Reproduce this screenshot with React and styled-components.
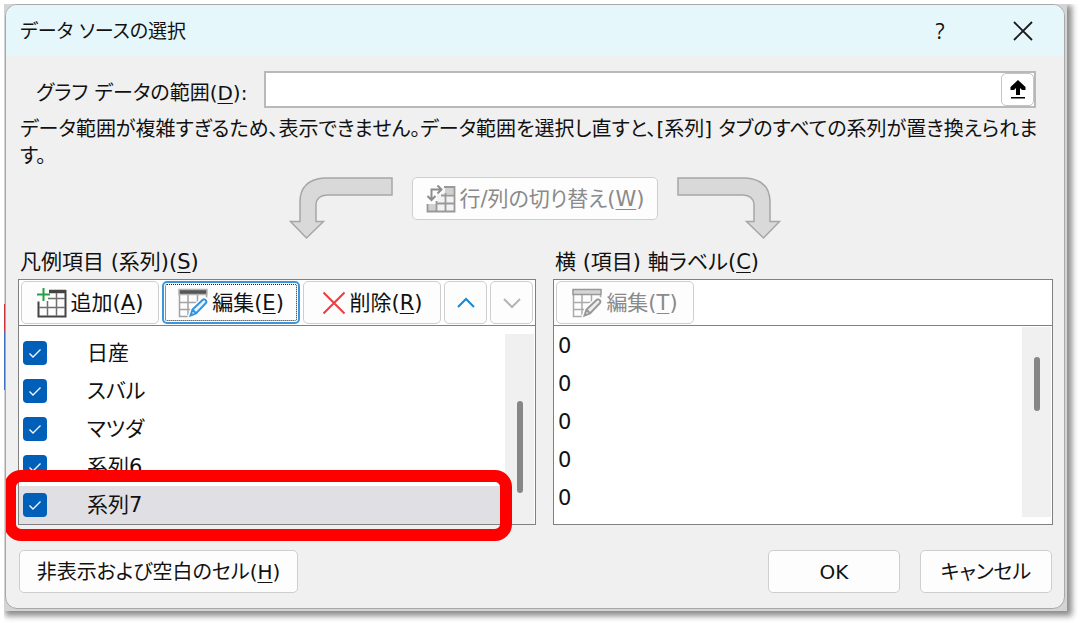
import React, { useState } from 'react';
import styled, { createGlobalStyle } from 'styled-components';

const GlobalStyle = createGlobalStyle`
    * {
        box-sizing: border-box;
    }

    body {
        margin: 0;
        background: #fff;
        color: #111;
        font-family: "DejaVu Sans", "Noto Sans CJK JP", sans-serif;
        font-size: 21px;
        line-height: 28px;
        font-feature-settings: "palt";
    }

    button, input {
        font: inherit;
        font-feature-settings: inherit;
        color: inherit;
    }

    u {
        text-decoration-thickness: 1px;
        text-underline-offset: 3px;
    }
`;

const Frame = styled.div`
    margin: 4px 13px 13px 4px;
    padding: 0 2px 2px 1px;
    background:
        linear-gradient(#d4d4d4 300px, #c8323c 300px, #c8323c 326px, #3f6fc0 330px, #3f6fc0 386px, #d4d4d4 386px) left / 2px 100% no-repeat,
        #d4d4d4;
    box-shadow: 3px 3px 6px 2px #8c8c8c;
    clip-path: inset(0 -13px -13px 0);
`;

const Dialog = styled.div`
    border: 1px solid #a8a8a8;
    border-radius: 12px;
    background: #f0f0f0;
    overflow: hidden;
`;

const TitleBar = styled.header`
    display: flex;
    align-items: center;
    height: 51px;
    padding: 0 21px 0 14px;
    background: #e5f7fa;
`;

const Title = styled.h1`
    flex: 1;
    margin: 0;
    font-size: 19px;
    font-weight: 400;
`;

const TitleButton = styled.button`
    display: flex;
    align-items: center;
    justify-content: center;
    width: 40px;
    height: 40px;
    margin-left: 43px;
    padding: 0;
    border: 0;
    background: none;
    font-family: "Open Sans", sans-serif;
`;

const Content = styled.main`
    padding: 15px 11px 15px 12px;
`;

const RangeRow = styled.div`
    display: flex;
    align-items: center;
    padding: 0 17px 0 18px;

    label {
        flex: 0 0 228px;
        padding-top: 7px;
        font-size: 20px;
    }
`;

const RangeField = styled.div`
    display: flex;
    flex: 1;
    height: 37px;
    border: 2px solid #b9b9bd;
    background: #fff;
`;

const RangeInput = styled.input`
    flex: 1;
    min-width: 0;
    border: 0;
    outline: 0;
    background: none;
`;

const PickButton = styled.button`
    display: flex;
    align-items: center;
    justify-content: center;
    width: 33px;
    padding: 0;
    border: 1px solid #c4c4c4;
    border-radius: 5px;
    background: #fff;
`;

const Message = styled.p`
    margin: 8px 0 7px;
    padding: 0 10px 0 2px;
    font-size: 20px;
    line-height: 27px;
`;

const SwitchRow = styled.div`
    display: flex;
    gap: 19px;
    padding-left: 271px;
    height: 62px;
`;

const Button = styled.button`
    display: flex;
    align-items: center;
    justify-content: center;
    gap: 4px;
    width: ${({$width}) => $width}px;
    height: 43px;
    padding: 0;
    border: 1px solid #cecece;
    border-radius: 5px;
    background: #fdfdfd;
    white-space: nowrap;

    &:disabled {
        color: #8a8a8a;
    }

    ${({$focused}) => $focused && `
        border: 2px solid #3a96dd;
        outline: 1px dotted #222;
        outline-offset: -4px;
    `}
`;

const Panels = styled.div`
    display: grid;
    grid-template-columns: 29fr 28fr;
    column-gap: 17px;
    margin-top: 9px;
`;

const PanelTitle = styled.h2`
    margin: 0 0 3px 2px;
    font-size: 21px;
    font-weight: 400;
`;

const Panel = styled.div`
    position: relative;
    border: 1px solid #808080;
    background: #fff;
`;

const Toolbar = styled.div`
    display: flex;
    gap: 3px;
    padding: 1px 2px;
    border-bottom: 1px solid #808080;
`;

const ListArea = styled.div`
    display: flex;
    height: 198px;
    padding: ${({$top}) => $top}px 1px 0 0;
`;

const List = styled.ul`
    flex: 1;
    margin: 0;
    padding: 0;
    list-style: none;
`;

const Row = styled.li`
    display: flex;
    align-items: center;
    height: 38px;
    padding-left: 4px;
    background: ${({$selected}) => $selected ? '#e0dfe4' : 'none'};

    label {
        display: flex;
        align-items: center;
        gap: 40px;
    }
`;

const CheckBox = styled.span`
    display: grid;
    width: 24px;
    height: 24px;

    input, svg {
        grid-area: 1 / 1;
        width: 24px;
        height: 24px;
        margin: 0;
    }

    input {
        appearance: none;
        border-radius: 4px;
        background: #005fb8;
    }

    svg {
        pointer-events: none;
    }
`;

const Track = styled.div`
    width: 29px;
    height: 190px;
    padding: ${({$offset}) => $offset}px 0 0 12px;
    background: #f0f0f0;
`;

const Thumb = styled.div`
    width: 6px;
    height: ${({$size}) => $size}px;
    border-radius: 3px;
    background: #868686;
`;

const Highlight = styled.div`
    position: absolute;
    left: -15px;
    right: 23px;
    bottom: -17px;
    height: 71px;
    border: 12px solid #ff0000;
    border-radius: 17px;
    pointer-events: none;
`;

const Footer = styled.footer`
    display: flex;
    gap: 20px;
    margin-top: 25px;
    padding: 0 1px;
    font-size: 20px;

    button:first-child {
        margin-right: auto;
    }
`;

const GridIcon = ({disabled}) => {
    const line = disabled ? '#aaa' : '#a3a3a3';
    const head = disabled ? '#999' : '#555';
    return (
        <svg width="30" height="30" viewBox="0 0 30 30" fill="none">
            <path d="M1.5 2V28.5H10M1.5 7V28M10 7V27M19.5 7V17M1 14.5H22M1 21.5H15M28.5 7V10" stroke={line} strokeWidth="1.5"/>
            <path d="M1 1.5H29V6.5H1Z" fill={disabled ? '#d5d5d5' : head} stroke={disabled ? head : '#b5b5b5'} strokeWidth="1.5"/>
            <path d="M12 28L14.5 20.5L24.5 11.5Q27 9.5 28.5 12Q29.5 14 27.5 16L18 25.5Z" fill="#fff" stroke="#fdfdfd" strokeWidth="4"/>
            <path d="M12.5 27.5L14.5 21.5L24.5 12Q26.5 10.5 28 12.5Q29 14 27.5 15.5L18 25.5ZM14.5 21.5L18 25.5" fill={disabled ? '#eee' : '#e3f2fc'} stroke={disabled ? '#999' : '#3493dc'} strokeWidth="2"/>
        </svg>
    );
};

const AddIcon = () => (
    <svg width="30" height="30" viewBox="0 0 30 30" fill="none">
        <path d="M1.5 13.5V28.5H28.5V2" stroke="#444" strokeWidth="2"/>
        <path d="M12 3.5H29" stroke="#444" strokeWidth="3.5"/>
        <path d="M11 10.5H28M2 19.5H28M10.5 13V28M19.5 5V28" stroke="#707070" strokeWidth="1.5"/>
        <path d="M6.5 0V13M0 6.5H13" stroke="#26a045" strokeWidth="2"/>
    </svg>
);

const SwitchIcon = () => (
    <svg width="30" height="28" viewBox="0 0 30 28" fill="none">
        <path d="M11 2H28V26H2V19H11Z" fill="#f2f2f2"/>
        <path d="M19 2H28V9H19ZM2 19H10V26H2Z" fill="#d0d0d0"/>
        <path d="M18 2H28.5V26.5H1.5V19M15 10.5H28M10 18.5H28M10.5 16V26M19.5 8V26" stroke="#999" strokeWidth="1.8"/>
        <path d="M5.5 14V4.500H15M11.500 0.500L15.500 4.500L11.500 8.500M1.500 11L5.500 15L9.500 11" stroke="#fdfdfd" strokeWidth="5"/>
        <path d="M5.5 15V4.5H15M11.5 .5L15.5 4.5L11.5 8.5M1.5 11L5.5 15L9.5 11" stroke="#8c8c8c" strokeWidth="2"/>
    </svg>
);

const DeleteIcon = () => (
    <svg width="24" height="24" viewBox="0 0 24 24" fill="none" stroke="#f03a3e" strokeWidth="2">
        <path d="M1.5 1.5L22.5 22.5M22.5 1.5L1.5 22.5"/>
    </svg>
);

const Chevron = ({down}) => (
    <svg width="18" height="12" viewBox="0 0 18 12" fill="none" stroke={down ? '#b5b5b5' : '#1a86d0'} strokeWidth="2">
        <path d={down ? 'M1 2L9 10L17 2' : 'M1 10L9 2L17 10'}/>
    </svg>
);

const CurveArrow = ({right}) => (
    <svg width="104" height="63" viewBox="0 0 104 63" fill="#d9d9d9" stroke="#a6a6a6" strokeWidth="1.5">
        <path d={right
            ? 'M1 1H69Q93 3 93 25V44.5H102.5L86.5 61L69.5 44.5H77V27Q76 18.5 66 18H1Z'
            : 'M103 1H35Q11 3 11 25V44.5H1.5L17.5 61L34.5 44.5H27V27Q28 18.5 38 18H103Z'}
        />
    </svg>
);

const names = ['日産', 'スバル', 'マツダ', '系列6', '系列7'];

export default function App() {
    const [range, setRange] = useState('');
    const [checked, setChecked] = useState(names.map(() => true));

    const toggle = (index) => {
        setChecked(checked.map((value, i) => i === index ? !value : value));
    };

    return (
        <Frame>
            <GlobalStyle/>
            <Dialog>
                <TitleBar>
                    <Title>データ ソースの選択</Title>
                    <TitleButton>?</TitleButton>
                    <TitleButton aria-label="閉じる">
                        <svg width="20" height="20" viewBox="0 0 20 20" stroke="#1a1a1a" strokeWidth="1.8">
                            <path d="M1 1L19 19M19 1L1 19"/>
                        </svg>
                    </TitleButton>
                </TitleBar>
                <Content>
                    <RangeRow>
                        <label htmlFor="range">グラフ データの範囲(<u>D</u>):</label>
                        <RangeField>
                            <RangeInput id="range" value={range} onChange={(e) => setRange(e.target.value)}/>
                            <PickButton aria-label="範囲の選択">
                                <svg width="16" height="20" viewBox="0 0 16 20">
                                    <path d="M8 0L15.5 7V10H12L10 8V15H6V8L4 10H.5V7Z"/>
                                    <path d="M1 17H15V18.5H1Z"/>
                                </svg>
                            </PickButton>
                        </RangeField>
                    </RangeRow>
                    <Message>
                        データ範囲が複雑すぎるため、表示できません。データ範囲を選択し直すと、[系列] タブのすべての系列が置き換えられます。
                    </Message>
                    <SwitchRow>
                        <CurveArrow/>
                        <Button $width={246} disabled><SwitchIcon/><span>行/列の切り替え(<u>W</u>)</span></Button>
                        <CurveArrow right/>
                    </SwitchRow>
                    <Panels>
                        <section>
                            <PanelTitle>凡例項目 (系列)(<u>S</u>)</PanelTitle>
                            <Panel>
                                <Toolbar>
                                    <Button $width={138}><AddIcon/><span>追加(<u>A</u>)</span></Button>
                                    <Button $width={138} $focused><GridIcon/><span>編集(<u>E</u>)</span></Button>
                                    <Button $width={138}><DeleteIcon/><span>削除(<u>R</u>)</span></Button>
                                    <Button $width={43} aria-label="上へ"><Chevron/></Button>
                                    <Button $width={43} aria-label="下へ" disabled><Chevron down/></Button>
                                </Toolbar>
                                <ListArea $top={8}>
                                    <List>
                                        {names.map((name, index) => (
                                            <Row key={name} $selected={index === 4}>
                                                <label>
                                                    <CheckBox>
                                                        <input type="checkbox" checked={checked[index]} onChange={() => toggle(index)}/>
                                                        {checked[index] && (
                                                            <svg viewBox="0 0 24 24" fill="none" stroke="#fff" strokeWidth="1.3">
                                                                <path d="M6.5 12.5L10 16L17.5 8.5"/>
                                                            </svg>
                                                        )}
                                                    </CheckBox>
                                                    {name}
                                                </label>
                                            </Row>
                                        ))}
                                    </List>
                                    <Track $offset={67}><Thumb $size={92}/></Track>
                                </ListArea>
                                <Highlight/>
                            </Panel>
                        </section>
                        <section>
                            <PanelTitle>横 (項目) 軸ラベル(<u>C</u>)</PanelTitle>
                            <Panel>
                                <Toolbar>
                                    <Button $width={138} disabled><GridIcon disabled/><span>編集(<u>T</u>)</span></Button>
                                </Toolbar>
                                <ListArea $top={1}>
                                    <List>
                                        {[0, 1, 2, 3, 4].map((key) => <Row key={key}>0</Row>)}
                                    </List>
                                    <Track $offset={30}><Thumb $size={54}/></Track>
                                </ListArea>
                            </Panel>
                        </section>
                    </Panels>
                    <Footer>
                        <Button $width={279}><span>非表示および空白のセル(<u>H</u>)</span></Button>
                        <Button $width={132}>OK</Button>
                        <Button $width={132}>キャンセル</Button>
                    </Footer>
                </Content>
            </Dialog>
        </Frame>
    );
}
